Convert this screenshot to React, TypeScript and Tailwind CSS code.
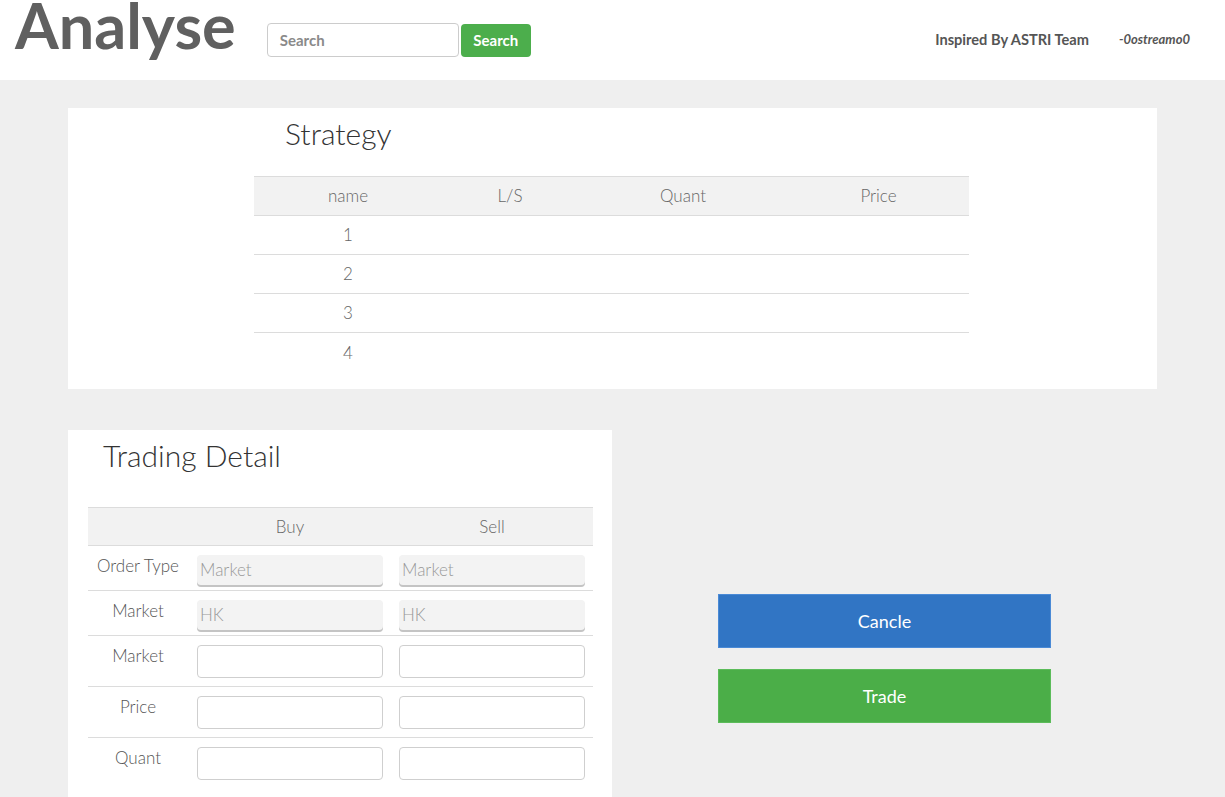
import React from "react";

const font = { fontFamily: "Lato, 'Open Sans', sans-serif" };

function StrategyTable() {
  const rows = ["1", "2", "3", "4"];
  return (
    <table className="w-[715px] border-collapse text-[17px] font-light text-[#666]">
      <thead>
        <tr className="h-[39px] bg-[#f2f2f2] border-t border-b border-[#dcdcdc]">
          <th className="w-[188px] font-light">name</th>
          <th className="w-[136px] font-light">L/S</th>
          <th className="w-[210px] font-light">Quant</th>
          <th className="w-[181px] font-light">Price</th>
        </tr>
      </thead>
      <tbody>
        {rows.map((r, i) => (
          <tr key={r} className={`h-[39px] ${i < 3 ? "border-b border-[#dcdcdc]" : ""}`}>
            <td className="text-center">{r}</td>
            <td></td>
            <td></td>
            <td></td>
          </tr>
        ))}
      </tbody>
    </table>
  );
}

function GreyInput({ value }: { value: string }) {
  return (
    <div className="h-[30px] w-[186px] rounded-[4px] bg-[#f3f3f3] shadow-[0_2px_0_#c4c4c4] pl-[3px] flex items-center text-[17px] font-light text-[#999]">
      {value}
    </div>
  );
}

function WhiteInput() {
  return <div className="h-[33px] w-[186px] rounded-[4px] border border-[#cfcfcf] bg-white" />;
}

function TradingTable() {
  const rows: { label: string; kind: "grey" | "white"; value?: string }[] = [
    { label: "Order Type", kind: "grey", value: "Market" },
    { label: "Market", kind: "grey", value: "HK" },
    { label: "Market", kind: "white" },
    { label: "Price", kind: "white" },
    { label: "Quant", kind: "white" },
  ];
  return (
    <div className="w-[505px] text-[17px] font-light text-[#555]">
      <div className="flex h-[39px] items-center bg-[#f2f2f2] border-t border-b border-[#dcdcdc]">
        <div className="w-[109px]" />
        <div className="w-[186px] text-center text-[#666]">Buy</div>
        <div className="w-[16px]" />
        <div className="w-[186px] text-center text-[#666]">Sell</div>
      </div>
      {rows.map((r, i) => (
        <div
          key={i}
          className={`flex ${r.kind === "grey" ? "h-[45px] pt-[9px]" : "h-[51px] pt-[9px]"} ${i < 4 ? "border-b border-[#dcdcdc]" : ""}`}
        >
          <div className="w-[100px] text-center leading-[22px]">{r.label}</div>
          <div className="w-[9px]" />
          {r.kind === "grey" ? <GreyInput value={r.value || ""} /> : <WhiteInput />}
          <div className="w-[16px]" />
          {r.kind === "grey" ? <GreyInput value={r.value || ""} /> : <WhiteInput />}
        </div>
      ))}
    </div>
  );
}

export default function App() {
  return (
    <div style={font} className="h-[797px] w-[1225px] overflow-hidden bg-[#efefef]">
      <header className="flex h-[80px] items-center bg-white">
        <div className="ml-[15px] self-start text-[63px] font-bold leading-[50px] text-[#606060]">Analyse</div>
        <div className="ml-[31px] flex items-center">
          <div className="flex h-[34px] w-[192px] items-center rounded-[4px] border border-[#cccccc] bg-white pl-[12px] text-[15px] font-bold text-[#8a8a8a]">
            Search
          </div>
          <div className="ml-[2px] flex h-[33px] w-[70px] items-center justify-center rounded-[4px] bg-[#4cae4c] text-[15px] font-bold text-white">
            Search
          </div>
        </div>
        <div className="ml-auto flex items-center pb-[1px]">
          <div className="text-[14.6px] font-bold text-[#555]">Inspired By ASTRI Team</div>
          <div className="ml-[30px] mr-[35px] text-[13px] font-bold italic text-[#555]">-0ostreamo0</div>
        </div>
      </header>
      <main className="px-[68px] pt-[28px]">
        <section className="h-[281px] w-[1089px] bg-white pl-[186px]">
          <h2 className="pl-[31px] h-[68px] text-[30px] font-light text-[#333] leading-[51px]">Strategy</h2>
          <StrategyTable />
        </section>
        <div className="mt-[41px] flex">
          <section className="h-[400px] w-[544px] bg-white px-[20px]">
            <h2 className="pl-[15px] pt-[6px] h-[77px] text-[30px] font-light text-[#333] leading-[38px]">Trading Detail</h2>
            <TradingTable />
          </section>
          <div className="ml-[106px] pt-[164px] flex flex-col gap-[21px]">
            <button className="h-[54px] w-[333px] border border-[#4a8ad6] bg-[#3175c4] text-[18px] text-white">Cancle</button>
            <button className="h-[54px] w-[333px] border border-[#5cbc5a] bg-[#4bae48] text-[18px] text-white">Trade</button>
          </div>
        </div>
      </main>
    </div>
  );
}
